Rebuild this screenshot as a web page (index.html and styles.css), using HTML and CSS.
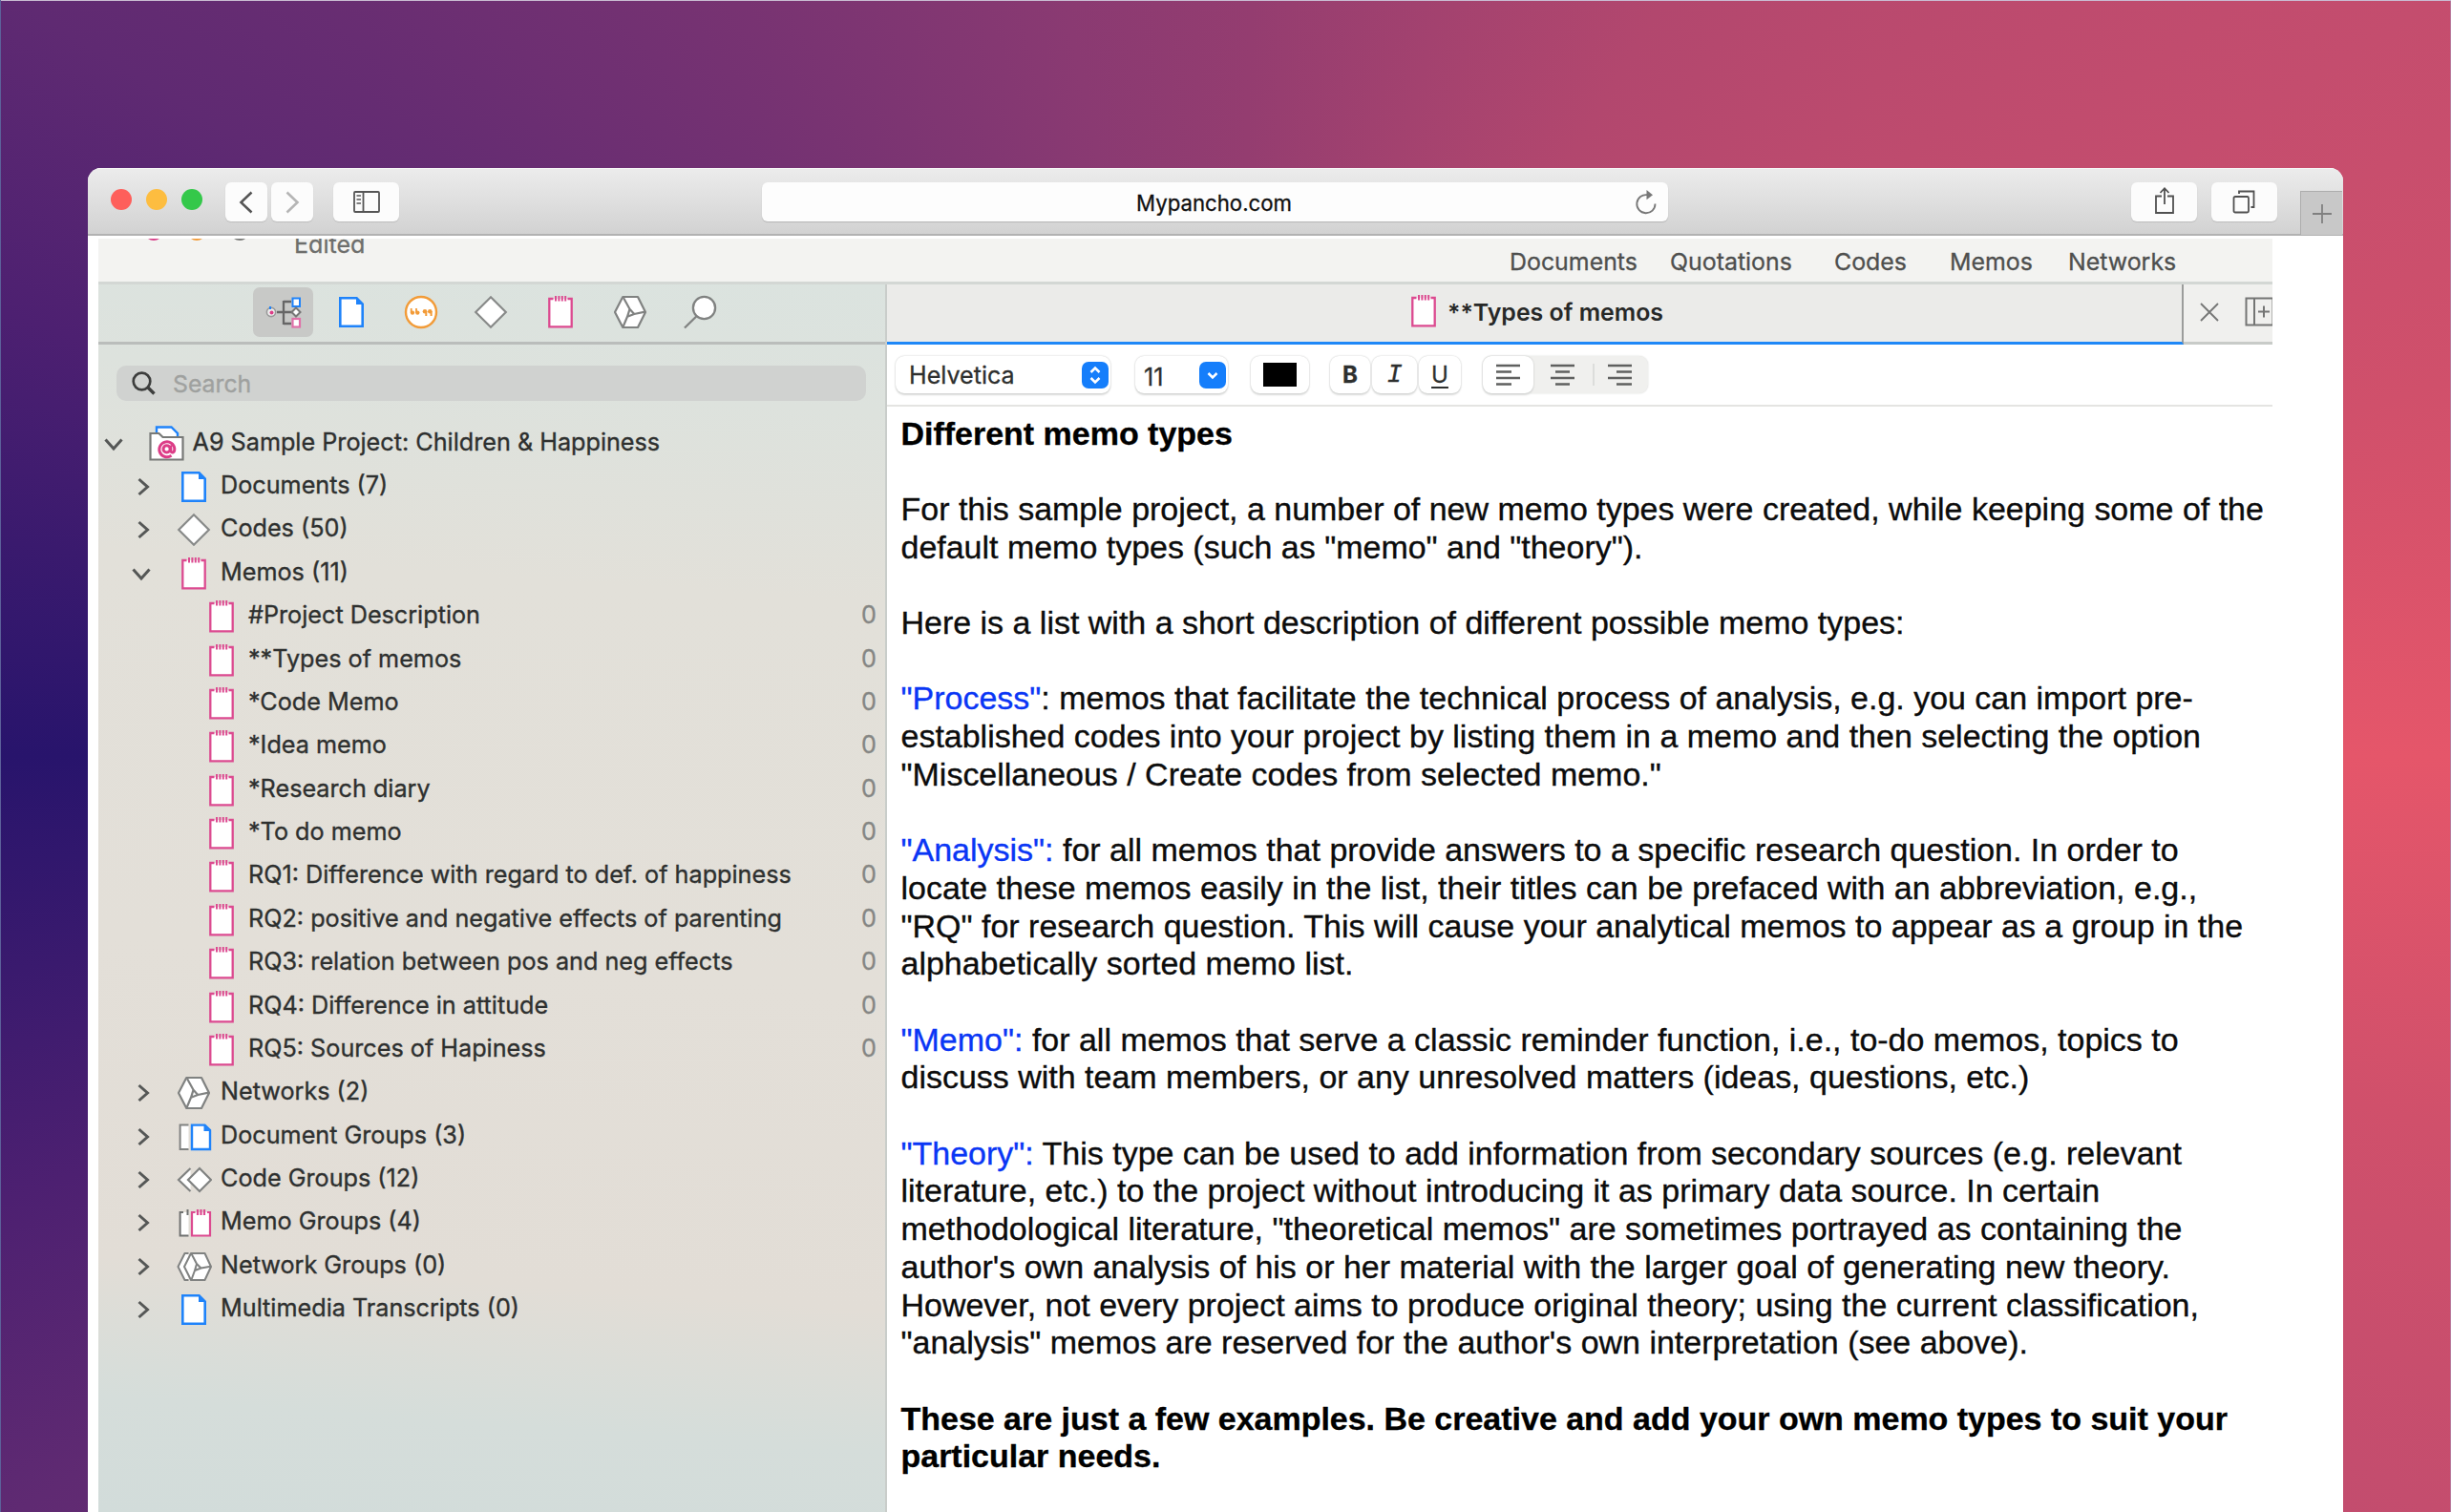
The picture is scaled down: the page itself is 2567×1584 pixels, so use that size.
FILE: index.html
```html
<!DOCTYPE html>
<html lang="en">
<head>
<meta charset="utf-8">
<title>Mypancho.com</title>
<link rel="stylesheet" href="styles.css">
</head>
<body>
<svg class="sprite" aria-hidden="true">
  <symbol id="doc" viewBox="0 0 38 38"><path d="M7.3 4.3H24.5L30.7 10.5V33.7H7.3Z" fill="#fff" stroke="#1f83fa" stroke-width="2.6"/><path d="M24 4v7h7z" fill="#1f83fa"/></symbol>
  <symbol id="memo" viewBox="0 0 38 38"><path d="M7.3 5H30.7V34.4H7.3Z" fill="#fff"/><path d="M11.5 5H7.3V34.4H30.7V5H26.5" fill="none" stroke="#dc4a90" stroke-width="2.3"/><path d="M14 2V7.5M17.4 2V7.5M20.8 2V7.5M24.2 2V7.5" stroke="#dc4a90" stroke-width="2"/></symbol>
  <symbol id="code" viewBox="0 0 38 38"><path d="M19 3.2 34.8 19 19 34.8 3.2 19Z" fill="#fff" stroke="#888a89" stroke-width="2.2"/></symbol>
  <symbol id="net" viewBox="0 0 38 38"><g stroke="#808281" stroke-width="2.2" stroke-linejoin="round"><path d="M3 19 11.3 3H27L35 19 27 35H11.3Z" fill="#fff"/><path d="M12 4 18.5 15.8 23.2 21 16 23.8 18.5 15.8M23.2 21 34.5 18.6M16 23.8 11.5 34.5" fill="none"/></g></symbol>
  <symbol id="docs" viewBox="0 0 38 38"><path d="M4.6 6.5H13.5V32H4.6Z" fill="#fff"/><path d="M13.5 6.5H4.6V32H13.5" fill="none" stroke="#808281" stroke-width="2"/><path d="M17 6.6H30.5L36 12V32H17Z" fill="#fff" stroke="#1f83fa" stroke-width="2.4"/><path d="M29.5 6.5v6.5H36z" fill="#1f83fa"/></symbol>
  <symbol id="codes" viewBox="0 0 38 38"><path d="M15.5 7 3 19 15.5 31" fill="#fff" stroke="#808281" stroke-width="2.2"/><path d="M25 7 37 19 25 31 13 19Z" fill="#fff" stroke="#808281" stroke-width="2.2"/></symbol>
  <symbol id="memos" viewBox="0 0 38 38"><path d="M4.6 8H13.5V32.5H4.6Z" fill="#fff"/><path d="M8 8H4.6V32.5H13.5M12.5 5v6" fill="none" stroke="#6f7170" stroke-width="2"/><path d="M17 8H36V32.5H17Z" fill="#fff"/><path d="M20.5 8H17V32.5H36V8H33M23 5v6M26.5 5v6M30 5v6" fill="none" stroke="#dc4a90" stroke-width="2.2"/></symbol>
  <symbol id="nets" viewBox="0 0 38 38"><g stroke="#808281" stroke-width="2" stroke-linejoin="round"><path d="M13.5 5H9.5L2.5 19 9.5 33H13.5" fill="#fff"/><path d="M9 19 16 5H30.5L37 19 30.5 33H16Z" fill="#fff"/><path d="M16.5 5.5 22 16 26.5 20.5 20 23 22 16M26.5 20.5 36.5 18.8M20 23 16.5 32.5" fill="none"/></g></symbol>
  <symbol id="project" viewBox="0 0 38 38"><path d="M8 1.5H23.5L30 8V16H8Z" fill="#fff" stroke="#1f83fa" stroke-width="2.4"/><path d="M1.5 35.5V8H10.5L14.5 12H35.5V35.5Z" fill="#fff" stroke="#777977" stroke-width="2.2"/><g fill="none" stroke="#dc3d87" stroke-width="3"><path d="M23.5 31.3A8 8 0 1 1 26.8 24C27 29 23 29 22.8 26V20.5"/><circle cx="18.6" cy="24.4" r="3.6"/></g></symbol>
  <symbol id="right" viewBox="0 0 20 20"><path d="M4.500 2 13.500 10 4.500 18" fill="none" stroke="#555756" stroke-width="3"/></symbol>
  <symbol id="down" viewBox="0 0 20 20"><path d="M1.5 5.5 10 15 18.5 5.5" fill="none" stroke="#555756" stroke-width="3"/></symbol>
</svg>

<main class="page">
  <section class="window">
    <header class="titlebar">
      <div class="lights"><i class="red"></i><i class="yellow"></i><i class="green"></i></div>
      <div class="history">
        <span class="btn"><svg width="16" height="24" viewBox="0 0 16 24"><path d="M13.5 1.5 2.5 12 13.5 22.5" fill="none" stroke="#555" stroke-width="2.6"/></svg></span>
        <span class="btn"><svg width="16" height="24" viewBox="0 0 16 24"><path d="M2.5 1.5 13.5 12 2.5 22.5" fill="none" stroke="#b5b5b5" stroke-width="2.6"/></svg></span>
      </div>
      <span class="btn panel-btn"><svg width="28" height="23" viewBox="0 0 28 23" fill="none" stroke="#555"><rect x="1" y="1" width="26" height="21" rx="1" stroke-width="1.8"/><path d="M10.5 1V22" stroke-width="1.8"/><path d="M3.5 5H8M3.5 9H8M3.5 13H8" stroke-width="1.3"/></svg></span>
      <div class="address"><span>Mypancho.com</span><svg width="24" height="26" viewBox="0 0 24 26"><path d="M13.5 5.2A9.6 9.6 0 1 0 21.5 14.5" fill="none" stroke="#777" stroke-width="1.8"/><path d="M12.5 0 19 5.2 12.5 10.2Z" fill="#777"/></svg></div>
      <span class="btn share-btn"><svg width="22" height="30" viewBox="0 0 22 30" fill="none" stroke="#505050" stroke-width="1.8"><path d="M8 10.5H2V28H20V10.5H14M11 19V2.5M6.5 7 11 2.2 15.5 7"/></svg></span>
      <span class="btn tabs-btn"><svg width="24" height="25" viewBox="0 0 24 25" fill="none" stroke="#505050" stroke-width="1.8"><rect x="1.5" y="7" width="15.5" height="16.5" rx="1.5"/><path d="M7 4V1.5H22.5V18H19.5"/></svg></span>
      <span class="new-tab"><svg width="22" height="22" viewBox="0 0 22 22"><path d="M11 1V21M1 11H21" stroke="#808080" stroke-width="1.8"/></svg></span>
    </header>

    <div class="app">
      <div class="app-head">
        <div class="head-left"><div class="stubs"><i></i><i></i><i></i></div><span class="edited">Edited</span></div>
        <nav><span>Documents</span><span>Quotations</span><span>Codes</span><span>Memos</span><span>Networks</span></nav>
      </div>

      <div class="columns">
        <aside class="sidebar">
          <div class="tools">
            <span class="tool selected"><svg width="38" height="38" viewBox="0 0 38 38" fill="none"><path d="M12 19H30M19 8H27M19 31H27M19 7V32" stroke="#666" stroke-width="2.3"/><circle cx="6" cy="19" r="4.6" fill="#eee" stroke="#999" stroke-width="1.6"/><circle cx="6.5" cy="19.5" r="2" fill="#dc3d87"/><path d="M5 13V16" stroke="#1f83fa" stroke-width="2"/><rect x="28.5" y="4.5" width="7.5" height="8.5" fill="#fff" stroke="#1f83fa" stroke-width="2"/><path d="M32 14.5 36.5 19 32 23.5 27.5 19Z" fill="#fff" stroke="#777" stroke-width="2"/><rect x="28.5" y="26" width="7.5" height="8.5" fill="#fff" stroke="#e070a8" stroke-width="2.2"/></svg></span>
            <svg class="tool"><use href="#doc"/></svg>
            <svg class="tool" viewBox="0 0 38 38"><circle cx="19" cy="19" r="16" fill="#fff" stroke="#f29b38" stroke-width="2.4"/><g fill="#f29b38"><circle cx="10" cy="19.6" r="2.2"/><circle cx="15.3" cy="19.6" r="2.2"/><path d="M7.8 19.5V15h1.8v4zM13.1 19.5V15h1.8v4z"/><circle cx="23" cy="18.2" r="2.3"/><circle cx="28.3" cy="18.2" r="2.3"/><path d="M25.3 18V23h-2v-5zM30.6 18V23h-2v-5z"/></g></svg>
            <svg class="tool"><use href="#code"/></svg>
            <svg class="tool"><use href="#memo"/></svg>
            <svg class="tool"><use href="#net"/></svg>
            <svg class="tool" viewBox="0 0 38 38"><circle cx="23.5" cy="14.5" r="11.6" fill="#fff" stroke="#808281" stroke-width="2.3"/><path d="M15.8 23 3 35.5" stroke="#808281" stroke-width="2.3"/></svg>
          </div>
          <div class="search"><svg width="25" height="25" viewBox="0 0 25 25" fill="none" stroke="#3d3e3d" stroke-width="2.7"><circle cx="10.5" cy="10.5" r="8.8"/><path d="M17 17 23.5 23.5" stroke-width="3.4"/></svg><span>Search</span></div>
          <ul class="tree">
            <li class="l0"><svg class="chev"><use href="#down"/></svg><svg class="ico"><use href="#project"/></svg><span>A9 Sample Project: Children &amp; Happiness</span></li>
            <li class="l1"><svg class="chev"><use href="#right"/></svg><svg class="ico"><use href="#doc"/></svg><span>Documents (7)</span></li>
            <li class="l1"><svg class="chev"><use href="#right"/></svg><svg class="ico"><use href="#code"/></svg><span>Codes (50)</span></li>
            <li class="l1 open"><svg class="chev"><use href="#down"/></svg><svg class="ico"><use href="#memo"/></svg><span>Memos (11)</span></li>
            <li class="l2"><svg class="ico"><use href="#memo"/></svg><span>#Project Description</span><b>0</b></li>
            <li class="l2"><svg class="ico"><use href="#memo"/></svg><span>**Types of memos</span><b>0</b></li>
            <li class="l2"><svg class="ico"><use href="#memo"/></svg><span>*Code Memo</span><b>0</b></li>
            <li class="l2"><svg class="ico"><use href="#memo"/></svg><span>*Idea memo</span><b>0</b></li>
            <li class="l2"><svg class="ico"><use href="#memo"/></svg><span>*Research diary</span><b>0</b></li>
            <li class="l2"><svg class="ico"><use href="#memo"/></svg><span>*To do memo</span><b>0</b></li>
            <li class="l2"><svg class="ico"><use href="#memo"/></svg><span>RQ1: Difference with regard to def. of happiness</span><b>0</b></li>
            <li class="l2"><svg class="ico"><use href="#memo"/></svg><span>RQ2: positive and negative effects of parenting</span><b>0</b></li>
            <li class="l2"><svg class="ico"><use href="#memo"/></svg><span>RQ3: relation between pos and neg effects</span><b>0</b></li>
            <li class="l2"><svg class="ico"><use href="#memo"/></svg><span>RQ4: Difference in attitude</span><b>0</b></li>
            <li class="l2"><svg class="ico"><use href="#memo"/></svg><span>RQ5: Sources of Hapiness</span><b>0</b></li>
            <li class="l1"><svg class="chev"><use href="#right"/></svg><svg class="ico"><use href="#net"/></svg><span>Networks (2)</span></li>
            <li class="l1"><svg class="chev"><use href="#right"/></svg><svg class="ico"><use href="#docs"/></svg><span>Document Groups (3)</span></li>
            <li class="l1"><svg class="chev"><use href="#right"/></svg><svg class="ico"><use href="#codes"/></svg><span>Code Groups (12)</span></li>
            <li class="l1"><svg class="chev"><use href="#right"/></svg><svg class="ico"><use href="#memos"/></svg><span>Memo Groups (4)</span></li>
            <li class="l1"><svg class="chev"><use href="#right"/></svg><svg class="ico"><use href="#nets"/></svg><span>Network Groups (0)</span></li>
            <li class="l1"><svg class="chev"><use href="#right"/></svg><svg class="ico"><use href="#doc"/></svg><span>Multimedia Transcripts (0)</span></li>
          </ul>
        </aside>

        <section class="editor">
          <div class="tabs">
            <div class="tab"><svg class="ico"><use href="#memo"/></svg><span>**Types of memos</span></div>
            <div class="tab-actions">
              <svg width="20" height="20" viewBox="0 0 20 20"><path d="M1 1 19 19M19 1 1 19" stroke="#767776" stroke-width="1.9"/></svg>
              <svg class="split" width="32" height="31" viewBox="0 0 32 31" fill="none" stroke="#747574" stroke-width="2"><path d="M1.500 1.500H29.500V29.500H1.500ZM10 1.500V29.500M14 15.500H26M20 9.500V21.500"/></svg>
            </div>
          </div>
          <div class="format">
            <div class="pill font"><span>Helvetica</span><svg class="knob" viewBox="0 0 28 28"><path d="M9.5 11 14 6.5 18.500 11M9.500 17 14 21.500 18.500 17"/></svg></div>
            <div class="pill size"><span>11</span><svg class="knob" viewBox="0 0 28 28"><path d="M9.500 12 14 16.500 18.500 12"/></svg></div>
            <div class="pill colour"><i></i></div>
            <div class="styles"><span class="pill bold">B</span><span class="pill italic">I</span><span class="pill under">U</span></div>
            <div class="align">
              <span class="pill"><svg width="26" height="24" viewBox="0 0 26 24"><path d="M0 2H25M0 8.500H16M0 15H25M0 21.500H16"/></svg></span>
              <span class="cell"><svg width="26" height="24" viewBox="0 0 26 24"><path d="M0 2H25M5 8.500H20M0 15H25M5 21.500H20"/></svg></span>
              <span class="cell last"><svg width="26" height="24" viewBox="0 0 26 24"><path d="M0 2H25M9 8.500H25M0 15H25M9 21.500H25"/></svg></span>
            </div>
          </div>
          <article class="text">
            <p><strong>Different memo types</strong></p>
            <p>For this sample project, a number of new memo types were created, while keeping some of the<br>default memo types (such as "memo" and "theory").</p>
            <p>Here is a list with a short description of different possible memo types:</p>
            <p><em>"Process"</em>: memos that facilitate the technical process of analysis, e.g. you can import pre-<br>established codes into your project by listing them in a memo and then selecting the option<br>"Miscellaneous / Create codes from selected memo."</p>
            <p><em>"Analysis":</em> for all memos that provide answers to a specific research question. In order to<br>locate these memos easily in the list, their titles can be prefaced with an abbreviation, e.g.,<br>"RQ" for research question. This will cause your analytical memos to appear as a group in the<br>alphabetically sorted memo list.</p>
            <p><em>"Memo":</em> for all memos that serve a classic reminder function, i.e., to-do memos, topics to<br>discuss with team members, or any unresolved matters (ideas, questions, etc.)</p>
            <p><em>"Theory":</em> This type can be used to add information from secondary sources (e.g. relevant<br>literature, etc.) to the project without introducing it as primary data source. In certain<br>methodological literature, "theoretical memos" are sometimes portrayed as containing the<br>author's own analysis of his or her material with the larger goal of generating new theory.<br>However, not every project aims to produce original theory; using the current classification,<br>"analysis" memos are reserved for the author's own interpretation (see above).</p>
            <p><strong>These are just a few examples. Be creative and add your own memo types to suit your<br>particular needs.</strong></p>
          </article>
        </section>
      </div>
    </div>
  </section>
</main>
</body>
</html>
```
FILE: styles.css
```css
* { box-sizing: border-box; }
html, body { margin: 0; height: 100%; overflow: hidden; }
body { font-family: Inter, "Liberation Sans", sans-serif; font-size: 25.1px; color: #2e302f; }
.sprite { position: absolute; width: 0; height: 0; }
svg { display: block; flex: none; }

.page {
  height: 1584px; width: 2567px; padding: 176px 113px 0 92px; display: flex;
  background: conic-gradient(from 270deg at 50% 50%,
    #28146c 0deg, #3a1a6e 10deg, #4d2071 20deg, #5f2a72 32deg, #6d2f72 45deg, #8a3a72 78deg, #943d70 92deg,
    #b2476e 120deg, #c44d6e 148deg, #d0506b 163deg, #e5566a 180deg,
    #d0506b 197deg, #c44d6e 212deg, #b2476e 240deg, #943d70 268deg, #8a3a72 282deg,
    #6d2f72 315deg, #5f2a72 328deg, #4d2071 340deg, #3a1a6e 350deg, #28146c 360deg);
  box-shadow: inset 1px 0 #5c619a, inset 0 1px #c9bcd2, inset -1px 0 #b97a9c;
}
.window { flex: 1; display: flex; flex-direction: column; background: #fff; border-radius: 14px 14px 0 0; overflow: hidden; }

/* browser chrome */
.titlebar {
  height: 71px; flex: none; display: flex; align-items: flex-start; padding-left: 24px;
  background: linear-gradient(#ececec, #d2d2d2); border-bottom: 2px solid #b2b2b2; box-shadow: inset 0 1px #f6f6f6;
}
.lights { display: flex; gap: 15px; padding-top: 22px; }
.lights i { width: 22px; height: 22px; border-radius: 50%; }
.red { background: #fe5f5b; } .yellow { background: #fdbd40; } .green { background: #34c84a; }
.btn {
  height: 41px; width: 44px; margin-top: 15px; border-radius: 6px; background: #fcfcfc;
  display: flex; align-items: center; justify-content: center; box-shadow: 0 1px 1px #bcbcbc;
}
.history { display: flex; gap: 4px; margin-left: 24px; }
.panel-btn { width: 69px; margin-left: 21px; }
.address {
  width: 949px; height: 41px; margin: 15px 0 0 380px; border-radius: 6px; display: flex; align-items: center;
  background: #fdfdfd; box-shadow: 0 1px 1px #b4b4b4; color: #111; font-size: 22.2px; -webkit-text-stroke: .3px;
}
.address span { flex: 1; padding: 2px 0 0 33px; text-align: center; }
.address svg { margin-right: 11px; }
.share-btn { width: 69px; margin-left: 485px; }
.share-btn svg { margin-top: -3px; }
.tabs-btn { width: 69px; margin-left: 15px; }
.tabs-btn svg { margin-right: 2px; }
.new-tab {
  width: 44px; height: 46px; margin: 24px 0 0 24px; display: flex; align-items: center; justify-content: center;
  background: #c8c8c8; border: solid #adadad; border-width: 1.500px 0 0 1.500px;
}

/* application inside the page */
.app { flex: 1; min-height: 0; width: 2277px; margin: 3px 0 0 11px; display: flex; flex-direction: column; overflow: hidden; }
.app-head { height: 48px; flex: none; display: flex; justify-content: space-between; background: #f3f3f1; border-bottom: 3px solid #d3d7d4; overflow: hidden; -webkit-text-stroke: .3px; }
.head-left { display: flex; }
.stubs { display: flex; gap: 25px; margin: -18px 0 0 48px; }
.stubs i { width: 20px; height: 20px; border-radius: 50%; background: #d8408a; }
.stubs i:nth-child(2) { background: #f29b38; }
.stubs i:nth-child(3) { background: #7c7d7b; }
.edited { margin: -9px 0 0 47px; line-height: 30px; color: #6d6e6c; }
nav { display: grid; grid-template-columns: 168px 172px 121px 124px 214px; line-height: 49px; font-size: 24.900px; color: #4e4f4e; }
.columns { flex: 1; min-height: 0; display: flex; }

.sidebar {
  width: 826px; flex: none; border-right: 2px solid #c9cdca; display: flex; flex-direction: column;
  background: linear-gradient(184deg, #dbe3df 0, #dde2dd 10%, #e2e0d9 25%, #e3dfd8 55%, #e2ddd6 80%, #d5ddda 91%, #d2dcda 100%);
  -webkit-text-stroke: .35px;
}
.tools { height: 63px; flex: none; border-bottom: 3px solid #babdbb; display: flex; align-items: center; gap: 35px; padding: 0 0 3px 162px; }
.tool { width: 38px; height: 38px; }
.tool.selected { width: 63px; height: 52px; border-radius: 7px; background: #c8c9c7; display: flex; align-items: center; justify-content: center; margin-right: -14px; }
.search { height: 37px; flex: none; margin: 22px 20px 20px 19px; padding-left: 16px; gap: 18px; border-radius: 10px; background: #d0d2d0; display: flex; align-items: center; color: #9fa19f; }
.search span { font-size: 24.800px; }
.tree { list-style: none; margin: 0; padding: 0; font-size: 25.200px; }
.tree li { height: 45.380px; display: flex; align-items: center; white-space: nowrap; }
.ico { width: 38px; height: 38px; margin-top: 4px; }
.chev { width: 20px; height: 20px; margin-top: 4px; }
.l0 { padding-left: 6px; }
.l0 .ico { margin: 4px 8px 0 26.500px; }
.l1 { padding-left: 37.500px; }
.l1 .ico { margin: 4px 9px 0 23.500px; }
.open { padding-left: 35px; }
.open .ico { margin-left: 26px; }
.l2 { padding-left: 110px; }
.l2 .ico { margin-right: 9px; }
.l2 b { margin-left: auto; width: 25px; font-weight: 400; color: #858684; }

.editor { flex: 1; min-width: 0; display: flex; flex-direction: column; background: #fff; }
.tabs { height: 63px; flex: none; display: flex; background: #ebebe9; }
.tab { width: 1358px; display: flex; align-items: center; justify-content: center; gap: 6px; padding: 0 0 2px; border-right: 2px solid #9b9c9b; border-bottom: 3px solid #1f88f7; font-weight: 600; font-size: 24.900px; color: #272827; }
.tab .ico { margin-top: -2px; }
.tab-actions { flex: 1; display: flex; align-items: center; gap: 27px; padding: 0 0 3px 17px; overflow: hidden; background: #f0f0ee; border-bottom: 3px solid #c8cbc8; }

.format { height: 65px; flex: none; display: flex; align-items: center; padding: 0 0 0 9px; border-bottom: 2px solid #e4e4e2; -webkit-text-stroke: .3px; }
.pill { height: 39px; border-radius: 9px; background: #fff; display: flex; align-items: center; justify-content: center; box-shadow: 0 0 2px #c4c6c4, 0 2px 2px #dcdddc; }
.knob { width: 28px; height: 28px; border-radius: 7px; background: #157efb; fill: none; stroke: #fff; stroke-width: 2.500px; }
.font { width: 225px; justify-content: space-between; padding: 0 2px 0 14px; }
.size { width: 97px; margin-left: 26px; justify-content: space-between; padding: 0 2px 0 9px; }
.size span { padding-top: 5px; }
.colour { width: 61px; margin-left: 24px; }
.colour i { width: 35px; height: 25px; background: #000; }
.styles { display: flex; gap: 2px; margin-left: 22px; }
.bold { width: 42px; font-weight: 700; font-size: 24px; }
.italic { width: 47px; font: italic 27px "Liberation Mono", monospace; }
.under { width: 44px; font-size: 24px; text-decoration: underline; text-underline-offset: 4px; text-decoration-thickness: 2px; }
.align { display: flex; margin-left: 23px; width: 173px; border-radius: 9px; background: #f0f0ee; box-shadow: 0 0 2px #d6d7d5; }
.align .pill { width: 53px; }
.align svg { fill: none; stroke: #5f605f; stroke-width: 2.600px; }
.cell { width: 62px; display: flex; align-items: center; justify-content: center; }
.last { width: 58px; position: relative; }
.last::before { content: ""; position: absolute; left: 0; top: 8px; bottom: 8px; width: 2px; background: #dcdddb; }

.text { padding: 8.500px 0 0 14.500px; font: 33.980px/39.700px "Liberation Sans", Arial, sans-serif; color: #0c0c0c; white-space: nowrap; -webkit-text-stroke: .35px; }
.text p { margin: 0 0 39.700px; }
.text em { font-style: normal; color: #0a36f5; }
.text strong { color: #000; }
```
